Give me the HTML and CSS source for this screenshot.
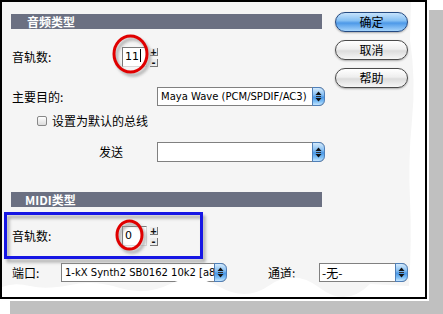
FILE: index.html
```html
<!DOCTYPE html>
<html>
<head>
<meta charset="utf-8">
<link rel="stylesheet" href="styles.css">
</head>
<body>
<div class="page">
  <div class="dialog">
    <div class="main">
      <div class="bar">音频类型</div>
      <div class="row r-tracks">
        <span class="label lw-tracks">音轨数:</span>
        <div class="num">11<i class="caret"></i></div>
        <div class="spin"><span>+</span><span>-</span></div>
      </div>
      <div class="row r-target">
        <span class="label lw-target">主要目的:</span>
        <div class="select w168"><span class="sel-text">Maya Wave (PCM/SPDIF/AC3)</span><span class="sel-arrow"><svg width="7" height="11" viewBox="0 0 7 11"><path d="M3.5 0.5 L6.5 4 L0.5 4 Z" fill="#111"/><rect x="1" y="5" width="5" height="1" fill="#333"/><path d="M0.5 7 L6.5 7 L3.5 10.5 Z" fill="#111"/></svg></span></div>
      </div>
      <div class="row r-check">
        <span class="chk"></span>
        <span>设置为默认的总线</span>
      </div>
      <div class="row r-send">
        <span class="label lw-send">发送</span>
        <div class="select w168"><span class="sel-text"></span><span class="sel-arrow"><svg width="7" height="11" viewBox="0 0 7 11"><path d="M3.5 0.5 L6.5 4 L0.5 4 Z" fill="#111"/><rect x="1" y="5" width="5" height="1" fill="#333"/><path d="M0.5 7 L6.5 7 L3.5 10.5 Z" fill="#111"/></svg></span></div>
      </div>
      <div class="bar bar-midi">MIDI类型</div>
      <div class="row r-midi">
        <span class="label lw-tracks">音轨数:</span>
        <div class="num">0</div>
        <div class="spin"><span>+</span><span>-</span></div>
      </div>
    </div>
    <div class="buttons">
      <div class="btn primary">确定</div>
      <div class="btn">取消</div>
      <div class="btn">帮助</div>
    </div>
    <div class="row r-port">
      <span class="label lw-port">端口:</span>
      <div class="select w166"><span class="sel-text">1-kX Synth2 SB0162 10k2 [a80</span><span class="sel-arrow"><svg width="7" height="11" viewBox="0 0 7 11"><path d="M3.5 0.5 L6.5 4 L0.5 4 Z" fill="#111"/><rect x="1" y="5" width="5" height="1" fill="#333"/><path d="M0.5 7 L6.5 7 L3.5 10.5 Z" fill="#111"/></svg></span></div>
      <span class="label lw-chan">通道:</span>
      <div class="select w89"><span class="sel-text">-无-</span><span class="sel-arrow"><svg width="7" height="11" viewBox="0 0 7 11"><path d="M3.5 0.5 L6.5 4 L0.5 4 Z" fill="#111"/><rect x="1" y="5" width="5" height="1" fill="#333"/><path d="M0.5 7 L6.5 7 L3.5 10.5 Z" fill="#111"/></svg></span></div>
    </div>
  </div>
  <svg class="overlay" width="443" height="314" viewBox="0 0 443 314">
    <defs>
      <filter id="blur" x="-20%" y="-20%" width="140%" height="140%"><feGaussianBlur stdDeviation="1.6"/></filter>
    </defs>
    <path d="M2,297 L2,287 Q14,282 30,286 T70,285 T120,288 T170,284 T220,287 T270,285 T320,288 T370,284 L409,286 Q412,240 410,200 T412,120 T410,40 L411,2 L425,2 L425,297 Z" fill="#fff"/>
    <rect x="8" y="217" width="196" height="44" fill="none" stroke="#9a9a9a" stroke-width="3" filter="url(#blur)" opacity="0.8"/>
    <rect x="5.5" y="213.5" width="196" height="44" fill="none" stroke="#1616e4" stroke-width="3"/>
    <ellipse cx="133" cy="57" rx="16.5" ry="18" fill="none" stroke="#999" stroke-width="3" filter="url(#blur)" opacity="0.8"/>
    <ellipse cx="130.5" cy="54" rx="16.5" ry="18" fill="none" stroke="#e00000" stroke-width="3"/>
    <ellipse cx="132" cy="238" rx="12.5" ry="14" fill="none" stroke="#999" stroke-width="3" filter="url(#blur)" opacity="0.8"/>
    <ellipse cx="129.5" cy="235" rx="12.5" ry="14" fill="none" stroke="#e00000" stroke-width="3"/>
  </svg>
</div>
</body>
</html>
```

FILE: styles.css
```css
html, body {
  margin: 0;
  padding: 0;
  background: #fff;
}
body {
  width: 443px;
  height: 314px;
  overflow: hidden;
  font-family: "Noto Sans CJK SC", sans-serif;
  color: #000;
}
.page {
  position: relative;
  width: 443px;
  height: 314px;
}
.dialog {
  box-sizing: border-box;
  width: 427px;
  height: 299px;
  border: 2px solid #000;
  background: #f5f5f5;
  box-shadow: 0 0 0 2px #fff, 13px 13px 0 3px #c0c0c0;
  display: grid;
  grid-template-columns: 314px 73px;
  column-gap: 10px;
  align-content: start;
  align-items: start;
  padding: 10px 0 0 9px;
}
.main {
  margin-top: 2px;
  display: flex;
  flex-direction: column;
}
.bar {
  height: 15px;
  width: 311px;
  background: #6b7082;
  color: #fff;
  font-weight: bold;
  font-size: 12px;
  line-height: 15px;
  padding-left: 16px;
  box-sizing: border-box;
}
.bar-midi {
  margin-top: 30px;
  padding-left: 14px;
}
.row {
  display: flex;
  align-items: center;
  font-size: 12px;
  line-height: 14px;
  white-space: nowrap;
}
.label {
  flex: none;
}
.lw-tracks { width: 110px; padding-left: 1px; }
.lw-target { width: 145px; padding-left: 1px; }
.lw-send { width: 58px; }
.lw-port { width: 49px; padding-left: 1px; }
.lw-chan { width: 51px; margin-left: 41px; }

.r-tracks { margin-top: 18px; height: 20px; }
.r-target { margin-top: 20px; height: 19px; }
.r-check { margin-top: 8px; height: 14px; padding-left: 26px; }
.r-send { margin-top: 14px; height: 20px; padding-left: 88px; }
.r-midi { margin-top: 19px; height: 20px; }
.r-port {
  grid-column: 1 / -1;
  margin-top: 17px;
  height: 19px;
}

.num {
  box-sizing: border-box;
  width: 25px;
  height: 20px;
  background: #fff;
  border: 1px solid;
  border-color: #7a7a7a #d8d8d8 #d8d8d8 #7a7a7a;
  font-family: "DejaVu Sans", sans-serif;
  font-size: 11px;
  line-height: 18px;
  padding-left: 2px;
}
.caret {
  display: inline-block;
  width: 1px;
  height: 13px;
  background: #000;
  vertical-align: -2px;
  margin-left: 1px;
}
.spin {
  display: flex;
  flex-direction: column;
  gap: 3px;
  margin-left: 3px;
  align-self: flex-start;
  margin-top: 1px;
}
.spin span {
  box-sizing: border-box;
  width: 8px;
  height: 8px;
  background: #ececec;
  border-right: 1px solid #777;
  border-bottom: 1px solid #777;
  font-family: "DejaVu Sans Mono", monospace;
  font-weight: bold;
  font-size: 10px;
  line-height: 7px;
  text-align: center;
  color: #111;
}

.select {
  box-sizing: border-box;
  height: 19px;
  display: flex;
  border: 1px solid #808080;
  border-right: none;
  background: #fff;
  border-radius: 0 6px 6px 0;
  flex: none;
}
.w168 { width: 168px; }
.w166 { width: 166px; }
.w89 { width: 89px; }
.r-send .select { height: 20px; }
.sel-text {
  flex: 1;
  overflow: hidden;
  white-space: nowrap;
  font-family: "DejaVu Sans", sans-serif;
  font-size: 10px;
  line-height: 17px;
  padding-left: 3px;
}
.w89 .sel-text {
  font-family: "Noto Sans CJK SC", sans-serif;
  font-size: 12px;
  padding-left: 2px;
}
.sel-arrow {
  box-sizing: border-box;
  width: 13px;
  margin: -1px 0;
  background: linear-gradient(#d4eafc, #86bff2 40%, #4a98e6 55%, #7fc0f6 80%, #c4e4fd);
  border: 1px solid #4f7fb8;
  border-radius: 0 6px 6px 0;
  display: flex;
  align-items: center;
  justify-content: center;
}

.chk {
  box-sizing: border-box;
  width: 10px;
  height: 10px;
  border: 1px solid #888;
  border-radius: 2px;
  background: linear-gradient(#fff, #dcdcdc);
  margin-right: 5px;
}

.buttons {
  display: flex;
  flex-direction: column;
  gap: 8px;
}
.btn {
  box-sizing: border-box;
  height: 20px;
  border-radius: 10px;
  border: 1px solid #4a4a4a;
  background: linear-gradient(#ffffff, #eeeeee 45%, #dcdcdc 55%, #f6f6f6);
  font-size: 12px;
  line-height: 18px;
  text-align: center;
  box-shadow: 0 1px 2px rgba(0, 0, 0, 0.3);
}
.btn.primary {
  background: linear-gradient(#c6e3fc, #86c0f3 42%, #4d99e8 56%, #a4d3fb);
  border-color: #244a82;
}

.overlay {
  position: absolute;
  left: 0;
  top: 0;
  pointer-events: none;
}
```
